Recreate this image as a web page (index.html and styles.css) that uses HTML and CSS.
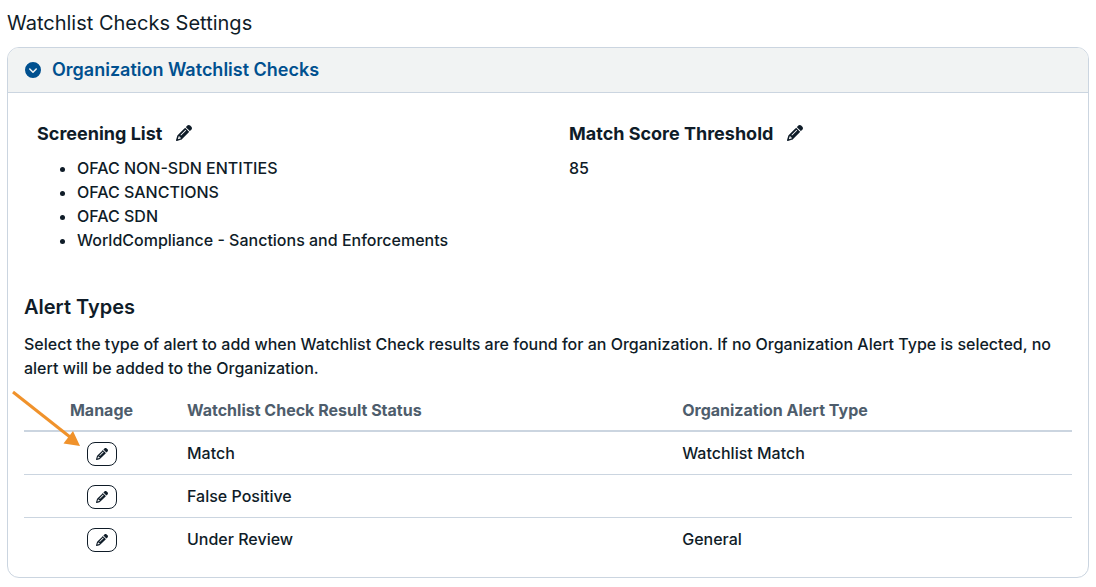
FILE: index.html
```html
<!DOCTYPE html>
<html lang="en">
<head>
    <meta charset="UTF-8">
    <meta name="viewport" content="width=device-width, initial-scale=1.0">
    <title>Watchlist Checks Settings</title>
    <link rel="stylesheet" href="styles.css">
</head>
<body>
    <svg class="sprite" aria-hidden="true">
        <symbol id="pencil" viewBox="0 0 512 512">
            <path d="M410.3 231l11.3-11.3-33.9-33.9-62.1-62.1L291.7 89.8l-11.3 11.3-22.6 22.6L58.6 322.9c-10.4 10.4-18 23.3-22.2 37.4L1 480.7c-2.5 8.4-.2 17.5 6.1 23.7s15.3 8.5 23.7 6.1l120.3-35.4c14.1-4.2 27-11.8 37.4-22.2L387.7 253.7 410.3 231zM160 399.4l-9.1 22.7c-4 3.1-8.5 5.4-13.3 6.9L59.4 452l23-78.1c1.4-4.9 3.8-9.4 6.9-13.3l22.7-9.1v32c0 8.8 7.2 16 16 16h32zM362.7 18.7L348.3 33.2 325.7 55.8 314.3 67.1l33.9 33.9 62.1 62.1 33.9 33.9 11.3-11.3 22.6-22.6 14.5-14.5c25-25 25-65.5 0-90.5L453.3 18.7c-25-25-65.5-25-90.5 0zm-47.4 168l-144 144c-6.2 6.2-16.4 6.2-22.6 0s-6.2-16.4 0-22.6l144-144c6.2-6.2 16.4-6.2 22.6 0s6.2 16.4 0 22.6z"/>
        </symbol>
    </svg>

    <h1 class="page-title">Watchlist Checks Settings</h1>

    <section class="panel">
        <h2 class="panel-header">
            <button type="button" class="panel-toggle" aria-expanded="true">
                <svg class="icon" viewBox="0 0 512 512" aria-hidden="true"><path d="M256 0a256 256 0 1 0 0 512A256 256 0 1 0 256 0zM135 241c-9.4-9.4-9.4-24.6 0-33.9s24.6-9.4 33.9 0l87 87 87-87c9.4-9.4 24.6-9.4 33.9 0s9.4 24.6 0 33.9L273 345c-9.4 9.4-24.6 9.4-33.9 0L135 241z"/></svg>
                Organization Watchlist Checks
            </button>
        </h2>

        <div class="panel-body">
            <div class="settings">
                <div class="setting">
                    <h3 class="setting-title">
                        Screening List
                        <button type="button" class="edit-link" aria-label="Edit Screening List"><svg class="icon" aria-hidden="true"><use href="#pencil"/></svg></button>
                    </h3>
                    <ul class="screening-list">
                        <li>OFAC NON-SDN ENTITIES</li>
                        <li>OFAC SANCTIONS</li>
                        <li>OFAC SDN</li>
                        <li>WorldCompliance - Sanctions and Enforcements</li>
                    </ul>
                </div>
                <div class="setting">
                    <h3 class="setting-title">
                        Match Score Threshold
                        <button type="button" class="edit-link" aria-label="Edit Match Score Threshold"><svg class="icon" aria-hidden="true"><use href="#pencil"/></svg></button>
                    </h3>
                    <p class="setting-value">85</p>
                </div>
            </div>

            <h3 class="alert-title">Alert Types</h3>
            <p class="alert-text">Select the type of alert to add when Watchlist Check results are found for an Organization. If no Organization Alert Type is selected, no alert will be added to the Organization.</p>

            <div class="table-wrap">
                <table class="alert-table">
                    <thead>
                        <tr>
                            <th class="manage">Manage</th>
                            <th class="result">Watchlist Check Result Status</th>
                            <th>Organization Alert Type</th>
                        </tr>
                    </thead>
                    <tbody>
                        <tr>
                            <td class="manage"><button type="button" class="edit-btn" aria-label="Edit Match"><svg class="icon-sm" aria-hidden="true"><use href="#pencil"/></svg></button></td>
                            <td>Match</td>
                            <td>Watchlist Match</td>
                        </tr>
                        <tr>
                            <td class="manage"><button type="button" class="edit-btn" aria-label="Edit False Positive"><svg class="icon-sm" aria-hidden="true"><use href="#pencil"/></svg></button></td>
                            <td>False Positive</td>
                            <td></td>
                        </tr>
                        <tr>
                            <td class="manage"><button type="button" class="edit-btn" aria-label="Edit Under Review"><svg class="icon-sm" aria-hidden="true"><use href="#pencil"/></svg></button></td>
                            <td>Under Review</td>
                            <td>General</td>
                        </tr>
                    </tbody>
                </table>
                <!-- callout arrow pointing at the first edit button -->
                <svg class="arrow" viewBox="0 0 72 58" aria-hidden="true">
                    <path class="arrow-line" d="M3 2L60 47"/>
                    <path class="arrow-head" d="M63 41L70 56L53.500 53.500z"/>
                </svg>
            </div>
        </div>
    </section>
</body>
</html>
```

FILE: styles.css
```css
* {
    box-sizing: border-box;
}
body {
    margin: 0;
    padding: 8px 7px;
    font-family: Inter, "Liberation Sans", sans-serif;
    font-size: 16px;
    font-weight: 500;
    line-height: 24px;
    color: #0f1c28;
    background: #fff;
}
h1, h2, h3, p, ul {
    margin: 0;
}
button {
    font: inherit;
    color: inherit;
    background: none;
    border: 0;
    padding: 0;
    cursor: pointer;
}
.sprite {
    display: none;
}
.icon {
    width: 16px;
    height: 16px;
    fill: currentColor;
}
.icon-sm {
    width: 12px;
    height: 12px;
    fill: currentColor;
}
.page-title {
    font-size: 20px;
    font-weight: 400;
    line-height: 30px;
    margin-bottom: 9px;
}
.panel {
    border: 1px solid #cbd5e0;
    border-radius: 12px;
    overflow: hidden;
}
.panel-header {
    padding: 8px 17px;
    background: #f1f3f3;
    border-bottom: 1px solid #cbd5e0;
}
.panel-toggle {
    display: flex;
    align-items: center;
    gap: 11px;
    font-size: 18px;
    font-weight: 600;
    line-height: 28px;
    color: #00508f;
}
.panel-body {
    padding: 27px 16px 16px;
}
.settings {
    display: grid;
    grid-template-columns: 1fr 1fr;
    gap: 16px;
    margin-bottom: 40px;
}
.setting {
    padding-left: 13px;
}
.setting-title {
    display: flex;
    align-items: center;
    gap: 14px;
    font-size: 18px;
    font-weight: 700;
    line-height: 28px;
    margin-bottom: 8px;
}
.edit-link {
    display: flex;
    padding-bottom: 2px;
}
.screening-list {
    padding-left: 40px;
}
.alert-title {
    font-size: 20px;
    font-weight: 600;
    line-height: 30px;
    margin-bottom: 10px;
}
.alert-text {
    margin-bottom: 8px;
}
.table-wrap {
    position: relative;
}
.alert-table {
    width: 100%;
    table-layout: fixed;
    border-collapse: separate;
    border-spacing: 0;
}
.alert-table th,
.alert-table td {
    height: 43px;
    padding: 8px;
    text-align: left;
    border-bottom: 1px solid #cbd5e0;
}
.alert-table th {
    height: 44px;
    padding-top: 10px;
    font-weight: 700;
    color: #4e5d6c;
    border-bottom-width: 2px;
}
.alert-table tbody tr:last-child td {
    border-bottom-color: transparent;
}
.alert-table .manage {
    width: 155px;
    padding-top: 10px;
    text-align: center;
}
.alert-table .result {
    width: 47.25%;
}
.edit-btn {
    display: flex;
    align-items: center;
    justify-content: center;
    width: 30px;
    height: 24px;
    margin: 0 auto;
    border: 1px solid #0f1c28;
    border-radius: 8px;
}
.arrow {
    position: absolute;
    top: 2px;
    left: -14px;
    width: 72px;
    height: 58px;
    pointer-events: none;
}
.arrow-line {
    fill: none;
    stroke: #f0922b;
    stroke-width: 3;
}
.arrow-head {
    fill: #f0922b;
}
```
